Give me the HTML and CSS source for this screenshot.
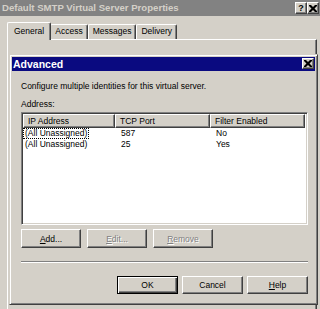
FILE: index.html
```html
<!DOCTYPE html>
<html lang="en">
<head>
  <meta charset="UTF-8" />
  <title>Default SMTP Virtual Server Properties</title>
  <link rel="stylesheet" href="styles.css">
</head>
<body>
  <div class="props">
    <div class="caption inactive">
      <span class="caption-text">Default SMTP Virtual Server Properties</span>
      <span class="caption-btns">
        <span class="cbtn help">?</span>
        <span class="cbtn">
          <svg width="8" height="7" viewBox="0 0 8 7"><path d="M0 0h2l2 2 2-2h2v1L5.5 3.5 8 6v1H6L4 5 2 7H0V6l2.5-2.5L0 1z" fill="#000"/></svg>
        </span>
      </span>
    </div>
    <div class="sheet">
      <div class="tabs">
        <div class="tab active">General</div>
        <div class="tab">Access</div>
        <div class="tab">Messages</div>
        <div class="tab">Delivery</div>
      </div>
      <div class="panel"></div>
    </div>
  </div>

  <div class="dialog">
    <div class="caption active">
      <span class="caption-text">Advanced</span>
      <span class="cbtn small">
        <svg width="8" height="7" viewBox="0 0 8 7"><path d="M0 0h2l2 2 2-2h2v1L5.5 3.5 8 6v1H6L4 5 2 7H0V6l2.5-2.5L0 1z" fill="#000"/></svg>
      </span>
    </div>
    <div class="dialog-body">
      <p class="intro">Configure multiple identities for this virtual server.</p>
      <div class="label">Address:</div>
      <div class="listview">
        <div class="lv-head">
          <div class="col c1">IP Address</div>
          <div class="col c2">TCP Port</div>
          <div class="col c3">Filter Enabled</div>
        </div>
        <div class="lv-row">
          <div class="cell c1"><span class="focus">(All Unassigned)</span></div>
          <div class="cell c2">587</div>
          <div class="cell c3">No</div>
        </div>
        <div class="lv-row">
          <div class="cell c1"><span class="nofocus">(All Unassigned)</span></div>
          <div class="cell c2">25</div>
          <div class="cell c3">Yes</div>
        </div>
      </div>
      <div class="btn-row">
        <button class="btn"><u>A</u>dd...</button>
        <button class="btn" disabled><u>E</u>dit...</button>
        <button class="btn" disabled><u>R</u>emove</button>
      </div>
      <div class="separator"></div>
      <div class="btn-row end">
        <button class="btn default">OK</button>
        <button class="btn">Cancel</button>
        <button class="btn"><u>H</u>elp</button>
      </div>
    </div>
  </div>
</body>
</html>
```

FILE: styles.css
```css
body {
  margin: 0;
  width: 320px;
  height: 309px;
  overflow: hidden;
  background: #d4d0c8;
  font-family: 'Liberation Sans', Arial, sans-serif;
  font-size: 8.5px;
  color: #000;
}

/* caption bars */
.caption {
  display: flex;
  align-items: flex-start;
  justify-content: space-between;
  box-sizing: border-box;
}
.caption-text {
  font-weight: bold;
  white-space: nowrap;
}
.caption.inactive {
  height: 16px;
  padding: 2px 1px 0 2px;
  background: #828282;
  color: #d4d0c8;
}
.caption.inactive .caption-text {
  font-size: 9.6px;
  line-height: 12px;
}
.caption.active {
  height: 14px;
  padding: 1px 1px 0 1px;
  background: #0a0a80;
  color: #fff;
}
.caption.active .caption-text {
  font-size: 10.5px;
  line-height: 12px;
}
.caption-btns {
  display: flex;
}
.cbtn {
  width: 12px;
  height: 12px;
  box-sizing: border-box;
  display: flex;
  align-items: center;
  justify-content: center;
  background: #d4d0c8;
  border: 1px solid;
  border-color: #fff #404040 #404040 #fff;
  box-shadow: inset -1px -1px #808080;
  font-weight: bold;
  font-size: 9px;
  color: #000;
}
.cbtn.small {
  height: 11px;
}

/* property sheet behind */
.sheet {
  padding: 6px 3px 0 7px;
}
.tabs {
  display: flex;
  align-items: flex-end;
  height: 17px;
  padding-left: 2px;
}
.tab {
  height: 14px;
  line-height: 13px;
  padding: 0 4px;
  border: 1px solid;
  border-bottom: none;
  border-color: #fff #404040 #404040 #fff;
  border-radius: 2px 2px 0 0;
  box-shadow: inset -1px 0 #808080;
}
.tab.active {
  height: 17px;
  line-height: 16px;
  padding: 0 6px;
  margin-left: -2px;
  margin-right: -1px;
  margin-bottom: -1px;
  position: relative;
  z-index: 1;
  background: #d4d0c8;
}
.panel {
  height: 280px;
  border-top: 1px solid #fff;
  border-left: 1px solid #fff;
  border-right: 1px solid #404040;
  box-shadow: inset -1px 0 #808080;
}

/* the Advanced dialog, a window lying over the sheet */
.dialog {
  position: absolute;
  left: 9px;
  top: 54px;
  width: 309px;
  height: 251px;
  box-sizing: border-box;
  padding: 2px;
  background: #d4d0c8;
  border: 1px solid;
  border-color: #d4d0c8 #404040 #404040 #d4d0c8;
  box-shadow: inset 1px 1px #fff, inset -1px -1px #808080;
}
.dialog-body {
  padding: 0 7px 0 9px;
}
.intro {
  margin: 10px 0 0;
  line-height: 11px;
}
.label {
  margin-top: 7px;
  line-height: 11px;
}

.listview {
  margin-top: 2px;
  height: 113px;
  box-sizing: border-box;
  background: #fff;
  border: 1px solid;
  border-color: #808080 #fff #fff #808080;
  box-shadow: inset 1px 1px #404040, inset -1px -1px #d4d0c8;
  padding: 1px;
}
.lv-head,
.lv-row {
  display: flex;
}
.col {
  height: 14px;
  line-height: 12px;
  box-sizing: border-box;
  padding-left: 4px;
  background: #d4d0c8;
  border: 1px solid;
  border-color: #fff #404040 #404040 #fff;
  box-shadow: inset -1px -1px #808080;
}
.c1 { width: 92px; }
.c2 { width: 95px; }
.c3 { width: 95px; }
.lv-row {
  height: 11px;
  line-height: 11px;
}
.cell {
  box-sizing: border-box;
  padding-left: 6px;
  white-space: nowrap;
}
.cell.c1 {
  padding-left: 0;
}
.focus,
.nofocus {
  display: inline-block;
  padding: 0 1px;
  line-height: 9px;
  border: 1px dotted #000;
}
.nofocus {
  border-color: transparent;
}

/* buttons */
.btn-row {
  display: flex;
  gap: 6px;
  margin-top: 4px;
}
.btn-row.end {
  justify-content: flex-end;
  gap: 4px;
  margin-top: 13px;
}
.btn {
  width: 60px;
  height: 19px;
  padding: 0;
  font: inherit;
  color: #000;
  background: #d4d0c8;
  border: 1px solid;
  border-color: #fff #404040 #404040 #fff;
  box-shadow: inset -1px -1px #808080;
}
.btn-row.end .btn {
  width: 61px;
  height: 18px;
}
.btn.default {
  border-color: #000;
  box-shadow: inset 1px 1px #fff, inset -1px -1px #404040, inset -2px -2px #808080;
}
.btn:disabled {
  color: #808080;
  text-shadow: 1px 1px #fff;
}
.separator {
  margin-top: 13px;
  border-top: 1px solid #808080;
  border-bottom: 1px solid #fff;
}
```
